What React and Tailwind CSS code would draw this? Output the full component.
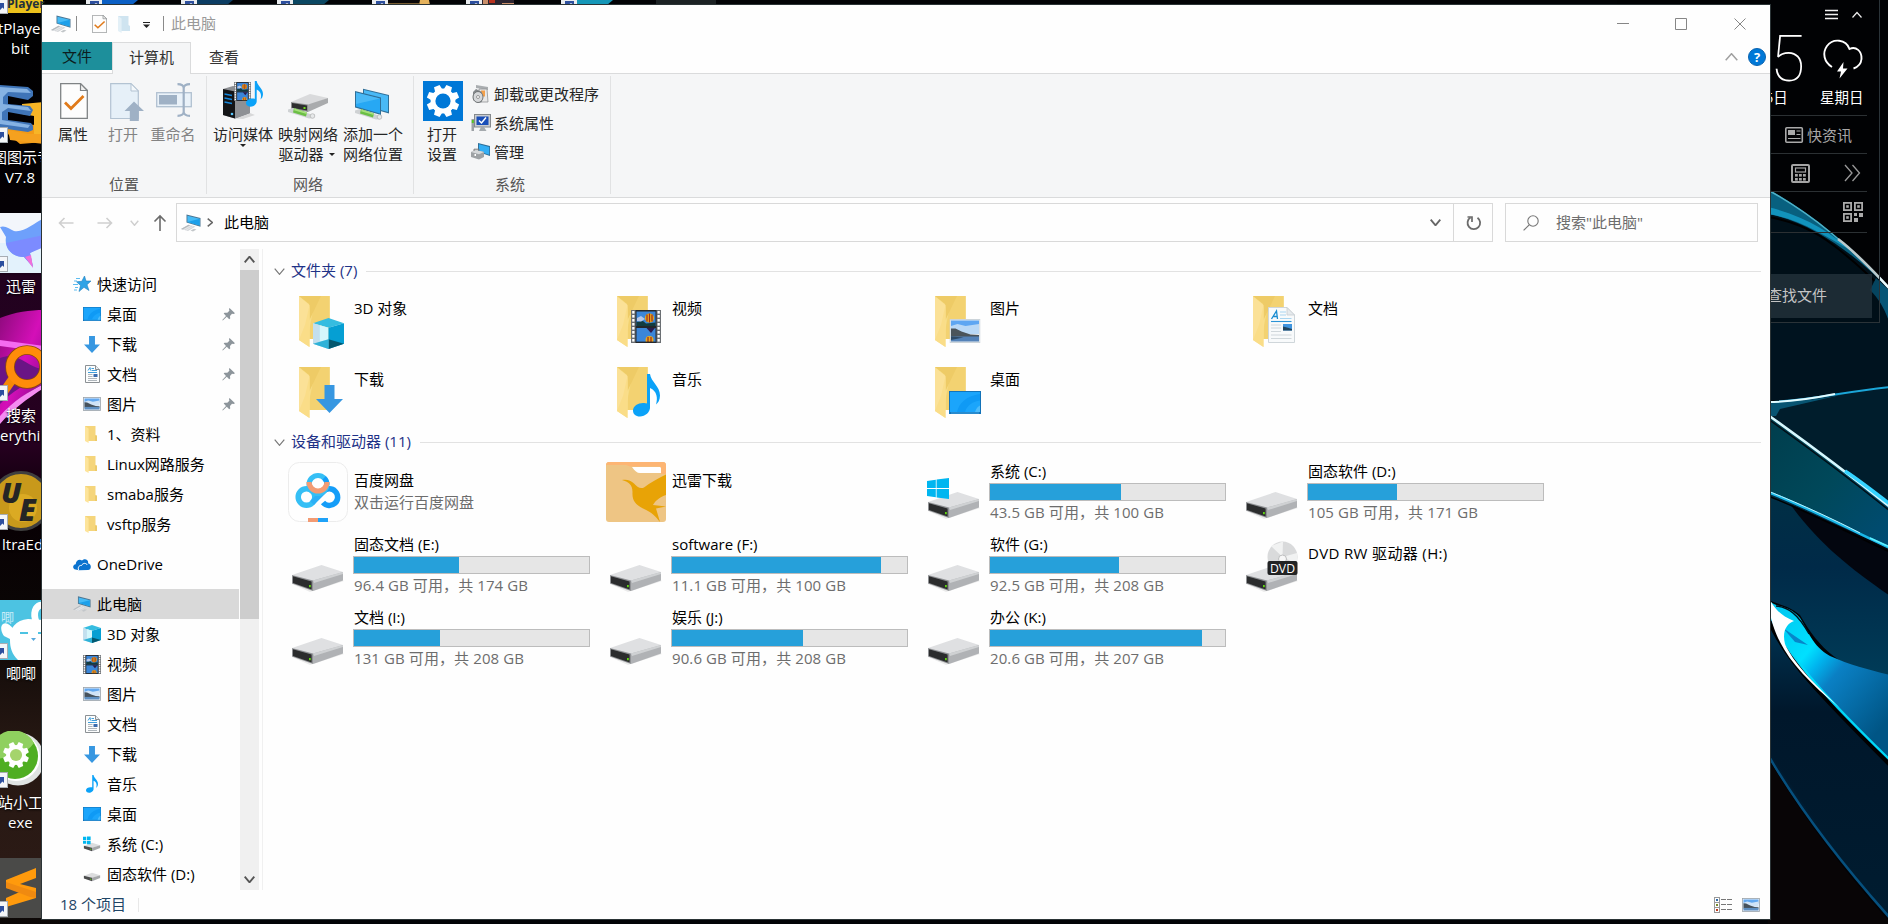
import React from "react";

/* ---------- small drawings ---------- */

const Pc = (p) => (
  <svg width="20" height="18" viewBox="0 0 20 18" {...p}>
    <path d="M0 15 7.500 10.800 14.500 12.600 7 17z" fill="#d3d6d9" />
    <path d="M0 15 7.500 10.800 9 11.200 1.600 15.400z" fill="#b4b9bd" />
    <path d="M3 15.500 10 11.700M5 16.200 12.300 12.300" stroke="#f3f4f5" strokeWidth=".6" />
    <path d="M9.500 16.500 13 14.700 15.500 15.500 12 17.500z" fill="#c3c7ca" />
    <path d="M5.500.5 19.500 4V12.800L5.500 8.600z" fill="#4a7592" />
    <path d="M6.400 1.700 18.700 4.700V11.600L6.400 7.900z" fill="#46bbf6" />
    <path d="M6.400 7.900 18.700 4.700V11.600z" fill="#1da0ea" />
  </svg>
);

const Cube = (p) => (
  <svg width="18" height="18" viewBox="0 0 32 32" {...p}>
    <path d="M16 0 32 5.5 16 10 0 5.5z" fill="#35bce0" />
    <path d="M0 5.5 16 10V32L0 26.5z" fill="#a9e4f4" />
    <path d="M0 5.5 7 7.5V29L0 26.5z" fill="#c3dfee" />
    <path d="M7 7.5 16 10V22L7 24.5z" fill="#d5f6fc" />
    <path d="M32 5.5 16 10V32L32 26.5z" fill="#059fd3" />
    <path d="M16 22 32 26.5 16 32z" fill="#04586f" />
    <path d="M16 22 0 26.5 16 32z" fill="#2fb2d8" />
  </svg>
);

const Film = (p) => (
  <svg width="18" height="19" viewBox="0 0 30 33" preserveAspectRatio="none" {...p}>
    <rect width="30" height="33" fill="#6b6f73" />
    <rect x="4.5" width="21" height="33" fill="#23272b" />
    <rect x="5.5" y="1.5" width="19" height="14.5" fill="#3b86d8" />
    <rect x="5.5" y="18" width="19" height="14" fill="#3b86d8" />
    <path d="M5.5 12 12 11 15 13.500 24.500 12.500V16H5.500z" fill="#123c40" />
    <path d="M6 8 10 6 14 9 10 11.500 6 11z" fill="#b8c7e6" />
    <circle cx="18.500" cy="8" r="4.600" fill="#e9a81b" />
    <path d="M16 4.500V11.500M18.500 3.500V12.500M21 4.500V11.500" stroke="#9c2b1d" strokeWidth="1.200" />
    <path d="M15.500 18H24L20 23z" fill="#2b1d4d" />
    <circle cx="18.500" cy="30" r="4" fill="#e9a81b" />
    <path d="M17 27V32M20 27V32" stroke="#9c2b1d" strokeWidth="1.200" />
    <rect x="5.500" y="31.600" width="19" height="1.400" fill="#23272b" />
    {[1, 5, 9, 13, 17, 21, 25, 29].map((y) => (
      <g key={y} fill="#fff">
        <rect x="1.200" y={y} width="2.300" height="2.600" />
        <rect x="26.500" y={y} width="2.300" height="2.600" />
      </g>
    ))}
  </svg>
);

const Photo = (p) => (
  <svg width="18" height="14" viewBox="0 0 31 24" preserveAspectRatio="none" {...p}>
    <rect x=".8" y=".8" width="29.400" height="22.400" fill="#f4f6f8" stroke="#9aa3ab" strokeWidth="1.400" />
    <rect x="2.500" y="2.500" width="26" height="7" fill="#62a8f0" />
    <path d="M2.500 8 9 6 17 8 28.500 6V15H2.500z" fill="#cfe3f7" />
    <path d="M2.500 9 7 9.500 14 13 22 15.500 28.500 16V18H2.500z" fill="#46525c" />
    <path d="M2.500 17H28.500V21.500H2.500z" fill="#5e8fc2" />
  </svg>
);

const BigPhoto = (p) => (
  <svg viewBox="0 0 31 24" {...p}>
    <rect x=".5" y=".5" width="30" height="23" fill="#e9eef2" stroke="#ccd4da" />
    <rect x="1.500" y="1.500" width="28" height="8" fill="#5ea6f2" />
    <path d="M1.500 7 8 5 16 7 29.500 5V15H1.500z" fill="#b9d8f6" />
    <path d="M1.500 9.500 6 9.500 12 12.500 21 15.500 29.500 16V18.500H1.500z" fill="#4b545b" />
    <path d="M1.500 17.500H29.500V22.500H1.500z" fill="#5482b8" />
    <path d="M1.500 17.500 14 18.500 1.500 21z" fill="#2f4a66" />
  </svg>
);

const Doc = (p) => (
  <svg width="15" height="18" viewBox="0 0 15 18" {...p}>
    <path d="M.5.500H10.500L14.500 4.500V17.500H.5z" fill="#fcfdfd" stroke="#8b9094" />
    <path d="M10.500.5V4.500H14.500" fill="#eceff1" stroke="#8b9094" />
    <path d="M3 5.500 5 2.500 5.500 5.500M6.500 3.500H9M6.500 5.500H12M3 7.500H12" fill="none" stroke="#2a93d6" strokeWidth=".9" />
    <path d="M3 9.500H7.500M3 11.500H7.500M3 13.500H12M3 15.500H12" stroke="#9aa3ab" strokeWidth=".8" />
    <rect x="8.500" y="9" width="4" height="3" fill="#3a6bad" />
  </svg>
);

const BigDoc = (p) => (
  <svg viewBox="0 0 27 36" {...p}>
    <path d="M.5.500H19L26.500 8V35.500H.5z" fill="#f8fafb" stroke="#cfd6da" />
    <path d="M19 .5V8H26.500z" fill="#e6eaed" stroke="#c5ccd1" strokeWidth=".8" />
    <path d="M3.500 12 8.500 4 9.500 12M5.500 9.500H9" stroke="#1a8cd0" strokeWidth="1.300" fill="none" />
    <path d="M12 5H18M12 8H18M12 11.500H23.500" stroke="#9fd0ee" strokeWidth=".9" />
    <path d="M3 14.500H23.500" stroke="#2a93d6" strokeWidth="1.100" />
    <path d="M3 18H13M3 21H13M3 24.500H13M3 28H23.500M3 31.500H23.500" stroke="#cbd2d7" strokeWidth=".9" />
    <rect x="15" y="17" width="9" height="6.500" fill="#3f94de" />
    <path d="M15 19.500 19 20.500 24 22V23.500H15z" fill="#21455f" />
  </svg>
);

const Down = (p) => (
  <svg width="16" height="17" viewBox="0 0 27 28" preserveAspectRatio="none" {...p}>
    <path d="M8.500 0H18.500V14H27L13.500 28 0 14H8.500z" fill="#3797e1" />
  </svg>
);

const Note = (p) => (
  <svg width="12" height="18" viewBox="0 0 27 43" preserveAspectRatio="none" {...p}>
    <path d="M14 0H17C18 8 27 12 27 21.500 27 26 25 29 23 30.500 25 24 24 17 17 14V33C17.500 38 12 42.500 7 42.500 2.500 42.500 0 40 0 36.500 0 32 5 29 10 29 12 29 13 29.300 14 29.500z" fill="#0ba2f8" />
  </svg>
);

const Desk = (p) => (
  <svg width="18" height="14" viewBox="0 0 32 24" preserveAspectRatio="none" {...p}>
    <rect width="32" height="24" fill="#1272b8" />
    <rect x="1" y="1" width="30" height="21" fill="#1ba5fb" />
    <path d="M8 22C10 12 18 5 31 3V10C24 11 18 15 16 22z" fill="#0f9af5" />
    <path d="M26 22C27 18 29 16 31 15V22z" fill="#4dbcfb" />
    <path d="M2 23H30" stroke="#5fc3ff" strokeWidth=".6" />
  </svg>
);

const DriveShape = () => (
  <g>
    <path d="M4 41V49L22 57 56 46 50 43z" fill="#000" opacity=".08" />
    <path d="M4 40 33.500 30 55 37 25 46z" fill="#dfe0e2" />
    <path d="M25 45.500 55 37V45.500L25 56z" fill="#b0b2b5" />
    <path d="M25 45.500 55 37V39L26 48z" fill="#cfd1d3" />
    <path d="M4 40 25 45.500V56L4 48.500z" fill="#8f9194" />
    <path d="M5 41.300 23.600 46.500V54.600L5 48z" fill="#2b2c2d" />
    <rect x="21" y="50" width="1.800" height="2.200" fill="#5fd411" />
  </g>
);

const WinLogo = (p) => (
  <svg width="22" height="21" viewBox="0 0 22 21" {...p}>
    <path d="M0 3 8.800 1.700V10H0zM9.600 1.600 22 0V10H9.600zM0 11H8.800V19.300L0 18zM9.600 11H22V21L9.600 19.400z" fill="#00b6f0" />
  </svg>
);

const Drive = ({ kind }) => (
  <svg width="60" height="60" viewBox="0 0 60 60">
    <DriveShape />
    {kind === "win" && <WinLogo x="3" y="16" />}
    {kind === "dvd" && (
      <g>
        <ellipse cx="40.500" cy="22" rx="15" ry="15.500" fill="#d9dadb" />
        <path d="M40.500 22 29 11 41 6.500zM40.500 22 55 18V29z" fill="#f1f2f2" />
        <circle cx="40.500" cy="24" r="4" fill="#f7f7f7" stroke="#bdbebf" />
        <rect x="25.500" y="26" width="30" height="14" rx="2" fill="#222324" />
        <text x="40.500" y="38" textAnchor="middle" fontSize="13" fontFamily="Open Sans, sans-serif" fill="#fff" textLength="25" lengthAdjust="spacingAndGlyphs">DVD</text>
      </g>
    )}
  </svg>
);

const SmallDrive = ({ win }) => (
  <svg width="20" height="18" viewBox="0 0 20 18">
    <path d="M1 11 10 7.500 19 10.500 10 13.500z" fill="#dcddde" />
    <path d="M10 13.200 19 10.500V13.500L10 17z" fill="#a5a7a9" />
    <path d="M1 11 10 13.200V17L1 14z" fill="#4b4c4d" />
    <rect x="8" y="14.200" width="1.200" height="1.200" fill="#5fd411" />
    {win && <path d="M0 1H3.600V4.500H0zM4.400.8H8.500V4.500H4.400zM0 5.300H3.600V8.800H0zM4.400 5.300H8.500V9.200H4.400z" fill="#00b6f0" />}
  </svg>
);

const SmallFolder = () => (
  <svg width="12" height="17" viewBox="0 0 12 17">
    <path d="M0 0H10.500V9L12 10V15H0z" fill="#f5d57b" />
    <path d="M0 0 3.600 2.500V17L0 15z" fill="#fde49a" />
    <path d="M10 9.500H12V15H10z" fill="#edca69" />
  </svg>
);

const overlays = {
  cube: <Cube x="25" y="27" width="31" height="31" />,
  film: <Film x="25" y="19" width="30" height="33" />,
  photo: <BigPhoto x="25.500" y="28" width="31" height="24" />,
  doc: <BigDoc x="26" y="16" width="27" height="36" />,
  down: <Down x="28" y="23" width="27" height="28" />,
  note: <Note x="27" y="12" width="27" height="43" />,
  desk: <Desk x="25" y="29" width="32" height="23" />,
};

const Folder = ({ kind }) => (
  <svg width="60" height="60" viewBox="0 0 60 60">
    <path d="M11 5H41.700V48H11z" fill="#f7dc85" />
    <path d="M28 5H41.700V48H21V40z" fill="#f1d06b" opacity=".8" />
    <path d="M11 5H33L21 30V13z" fill="#eecb66" />
    <path d="M11 5.500 21.500 14V56L11 49z" fill="#fbe197" />
    <path d="M17 34 21.500 14V56L11 49z" fill="#fadd88" />
    {overlays[kind]}
  </svg>
);

const Star = () => (
  <svg width="18" height="16" viewBox="0 0 18 16">
    <path d="M11.500 0 13 5H18L14 8.700 16 14.500 11 11.300 6 15.500 7.500 9.500 3.500 5.800 8.800 5.300z" fill="#2fa3e6" stroke="#1f7fc0" strokeWidth=".6" />
    <path d="M3 2.500H7M1 5H4M0 8.500H5M2 11.500H5M1 14H4" stroke="#5dbcf0" strokeWidth="1" />
  </svg>
);

const Cloud = () => (
  <svg width="18" height="13" viewBox="0 0 18 13">
    <path d="M2.500 11.500C-.8 11-.5 6.600 2.700 6.300 2.700 2.500 6.500.5 9 2.500 12-.5 16 2 15 5.200 18.500 5.500 19 11.500 15 12L6 12.300z" fill="#0a73cf" />
    <path d="M5.500 12C4.500 8.500 7 7 8.500 7.500 10 4.500 13.500 5 14.200 7" fill="none" stroke="#fff" strokeWidth="1" />
  </svg>
);

const Pin = () => (
  <svg width="14" height="14" viewBox="0 0 14 14">
    <path d="M7.500 1 13 6.200 11.500 7 10 6.800 8 9 8.200 11.500 7.200 12.300 4.800 9.800.8 13.500.3 13 4 9 1.700 6.600 2.500 5.700 5.300 5.800 7.400 3.800 7 2z" fill="#8d959b" />
  </svg>
);

const Chevron = ({ dir = "down", w = 11, h = 6, color = "#777", sw = 1.3 }) => {
  const d = {
    down: `M.7 .7 ${w / 2} ${h - 0.7} ${w - 0.7} .7`,
    up: `M.7 ${h - 0.7} ${w / 2} .7 ${w - 0.7} ${h - 0.7}`,
    right: `M.7 .7 ${w - 0.7} ${h / 2} .7 ${h - 0.7}`,
  };
  return (
    <svg width={w} height={h} viewBox={`0 0 ${w} ${h}`}>
      <path d={d[dir]} fill="none" stroke={color} strokeWidth={sw} />
    </svg>
  );
};

const Caret = () => (
  <svg width="6" height="3" viewBox="0 0 6 3"><path d="M0 0H6L3 3z" fill="#222" /></svg>
);

const CheckDoc = ({ w, h }) => (
  <svg width={w} height={h} viewBox="0 0 28 36" preserveAspectRatio="none">
    <path d="M.7.7H20.500L27.300 7.500V35.300H.7z" fill="#fdfdfd" stroke="#7f8385" strokeWidth="1.300" />
    <path d="M20.500.7V7.500H27.300z" fill="#f0f0f0" stroke="#7f8385" strokeWidth="1.200" />
    <path d="M5 19.500 11 25.500 23.500 13" fill="none" stroke="#e07a1a" strokeWidth="2.800" />
  </svg>
);

const OpenDoc = () => (
  <svg width="35" height="38" viewBox="0 0 35 38">
    <path d="M.7.7H21L28.300 8V35.500H.7z" fill="#e6f0f8" stroke="#b3c3d2" strokeWidth="1.200" />
    <path d="M21 .7V8H28.300z" fill="#f4f8fb" stroke="#b3c3d2" />
    <path d="M24 18.500 34 28H28.800V38H19.800V28H14.500z" fill="#9fb1c5" />
  </svg>
);

const Rename = () => (
  <svg width="36" height="34" viewBox="0 0 36 34">
    <rect x=".7" y="9.700" width="34.600" height="14" fill="#eaf2f9" stroke="#b0c0d0" strokeWidth="1.300" />
    <rect x="3" y="12" width="18" height="9.500" fill="#9fb1c5" />
    <path d="M21.500 1.200C25 1.200 27.500 2 27.700 5V29C27.500 32 25 32.800 21.500 32.800M34 1.200C30.500 1.200 28 2 27.700 5M27.700 29C28 32 30.500 32.800 34 32.800" fill="none" stroke="#9fb1c5" strokeWidth="2.200" />
  </svg>
);

const MediaServer = () => (
  <svg width="40" height="38" viewBox="0 0 40 38">
    <path d="M0 8 10 5 27 8V32L12 37.500 0 34z" fill="#8b8e92" />
    <path d="M0 8 12 10.500V37.500L0 34z" fill="#131517" />
    <path d="M12 10.500 27 8V32L12 37.500z" fill="#8e9195" />
    <path d="M1.500 13 9 14.500M1.500 17 9 18.500M1.500 21 9 22.500" stroke="#1688dd" strokeWidth="1.400" />
    <circle cx="9" cy="33" r="1.300" fill="#59c8ff" />
    <path d="M12 37.500 27 32 32 34 20 38z" fill="#000" opacity=".12" />
    <Film x="11" y="1" width="17" height="19" />
    <Note x="23" y="0" width="17" height="26" />
  </svg>
);

const NetPlug = ({ y }) => (
  <g transform={`translate(0 ${y})`}>
    <path d="M0 2.500 5 1 22 7 27 7.500 26 11 21 11.500 0 5z" fill="#cfd2d4" />
    <path d="M6 1 19 5.500 18 9.500 5 5.500z" fill="#6bbf45" />
    <path d="M6.500 1.500 19 5.500 18.700 7 6 3.200z" fill="#a7e07d" />
    <circle cx="24.500" cy="9" r="2.300" fill="#e6e8e9" stroke="#aaa" strokeWidth=".6" />
  </g>
);

const NetDrive = () => (
  <svg width="40" height="27" viewBox="0 0 40 27">
    <path d="M3 9 22 1 40 5 22 12z" fill="#d9dadc" />
    <path d="M20 11.500 40 5V10L20 19z" fill="#a9abad" />
    <path d="M3 9 20 11.500V19L3 15.500z" fill="#8c8e90" />
    <path d="M4 10 19 12.500V17.500L4 14.700z" fill="#2d2e2f" />
    <rect x="15.500" y="14" width="2" height="2" fill="#6fe01a" />
    <NetPlug y={14} />
  </svg>
);

const NetPlaces = () => (
  <svg width="36" height="32" viewBox="0 0 36 32">
    <path d="M8 .8 34 7V25.500L8 18z" fill="#2f6f98" />
    <path d="M9 2 33 7.700V24L9 17.500z" fill="#49b9f6" />
    <path d="M0 3 26 9.500V27L0 19.500z" fill="#2f6f98" />
    <path d="M1 4.400 25 10.400V25.500L1 18.600z" fill="#27a8f4" />
    <path d="M1 4.400 25 10.400 1 16z" fill="#58c0f8" opacity=".7" />
    <NetPlug y={20} />
  </svg>
);

const gearTeeth = [22.5, 67.5, 112.5, 157.5, 202.5, 247.5, 292.5, 337.5];
const Gear = ({ r = 20, fill = "#fff", hole = "#0078d7" }) => (
  <g transform={`translate(${r} ${r})`}>
    {gearTeeth.map((a) => (
      <path key={a} transform={`rotate(${a})`} d={`M${-r * 0.15} ${-r * 0.81}H${r * 0.15}L${r * 0.2} ${r * -0.5}H${-r * 0.2}z`} fill={fill} />
    ))}
    <circle r={r * 0.62} fill={fill} />
    <circle r={r * 0.38} fill={hole} />
  </g>
);

const Uninstall = () => (
  <svg width="20" height="20" viewBox="0 0 20 20">
    <path d="M5 1 17 3V6L5 4z" fill="#a9adb0" />
    <path d="M8 5H16L17 18H8z" fill="#e8e8e8" stroke="#8f9396" strokeWidth=".8" />
    <rect x="10" y="6.500" width="4" height="6" fill="#f3a04a" />
    <path d="M2 8 5 5 11 8V18L7 19 2 16z" fill="#84888b" />
    <ellipse cx="7" cy="13" rx="5" ry="5.500" fill="#d6d8da" stroke="#707476" />
    <circle cx="7" cy="13" r="1.500" fill="#fff" stroke="#777" strokeWidth=".7" />
  </svg>
);

const SysProps = () => (
  <svg width="20" height="18" viewBox="0 0 20 18">
    <rect x="3.500" y=".5" width="16" height="12.500" fill="#c9ccd0" stroke="#84898d" />
    <rect x="5.500" y="2.500" width="12" height="8.500" fill="#1a4fb8" />
    <path d="M8 6.500 10.500 9 15 3.500" stroke="#fff" strokeWidth="1.500" fill="none" />
    <path d="M10 13H13L15.500 17H8z" fill="#a5aaae" />
    <path d="M.5 5H3V17H.5z" fill="#9ca1a5" /><rect x=".8" y="6" width="2" height="3" fill="#56c425" />
  </svg>
);

const Manage = () => (
  <svg width="20" height="17" viewBox="0 0 20 17">
    <path d="M7 0 19 3V13L7 9z" fill="#2f6f98" />
    <path d="M8 1.300 18.200 4V11.800L8 8.500z" fill="#33aef4" />
    <path d="M0 9 5 7 13 9V14L8 16.500 0 14z" fill="#9ea2a5" />
    <path d="M0 9 5 7 13 9 8 11.300z" fill="#d5d8da" />
    <path d="M3 8V6.200H8V8" fill="none" stroke="#777" />
    <rect x="3.500" y="11" width="1.500" height="2" fill="#fff" />
  </svg>
);

/* ---------- desktop ---------- */

const Wallpaper = () => (
  <svg className="absolute inset-0" width="1888" height="924" viewBox="0 0 1888 924">
    <defs>
      <linearGradient id="swoosh" gradientUnits="userSpaceOnUse" x1="1770" y1="620" x2="1888" y2="720">
        <stop offset="0" stopColor="#00c8f0" /><stop offset=".32" stopColor="#00e0ff" />
        <stop offset=".42" stopColor="#00b4ee" /><stop offset=".55" stopColor="#0a80c4" /><stop offset="1" stopColor="#005585" />
      </linearGradient>
      <linearGradient id="teal" x1="0" y1="0" x2="1" y2="1">
        <stop offset="0" stopColor="#003d4c" /><stop offset=".5" stopColor="#00485a" /><stop offset="1" stopColor="#004c75" />
      </linearGradient>
      <linearGradient id="navy" x1="0" y1="0" x2="0" y2="1">
        <stop offset="0" stopColor="#002f45" /><stop offset=".4" stopColor="#002a48" /><stop offset="1" stopColor="#003c58" />
      </linearGradient>
      <linearGradient id="deep" x1="0" y1="0" x2="0" y2="1">
        <stop offset="0" stopColor="#003a5c" /><stop offset=".35" stopColor="#00172b" /><stop offset="1" stopColor="#001c30" />
      </linearGradient>
      <linearGradient id="rim" gradientUnits="userSpaceOnUse" x1="1800" y1="830" x2="1815" y2="820">
        <stop offset="0" stopColor="#06507e" /><stop offset="1" stopColor="#06507e" stopOpacity="0" />
      </linearGradient>
      <linearGradient id="left" x1="0" y1="0" x2="0" y2="1">
        <stop offset="0" stopColor="#000" /><stop offset=".28" stopColor="#050005" /><stop offset=".3" stopColor="#22021f" />
        <stop offset=".48" stopColor="#260020" /><stop offset=".56" stopColor="#080004" /><stop offset=".66" stopColor="#0a0605" />
        <stop offset=".8" stopColor="#251712" /><stop offset=".93" stopColor="#2b1a15" /><stop offset="1" stopColor="#0b0706" />
      </linearGradient>
      <linearGradient id="magenta" x1="0" y1="0" x2="1" y2="1">
        <stop offset="0" stopColor="#8d0a7c" /><stop offset=".5" stopColor="#d40fb8" /><stop offset="1" stopColor="#7a0a86" />
      </linearGradient>
    </defs>
    <rect width="1888" height="924" fill="#020306" />
    <rect width="60" height="924" fill="url(#left)" />
    <path d="M0 318C15 312 30 310 44 310V384C28 392 12 402 0 420z" fill="url(#magenta)" />
    <path d="M0 340 44 346V352L0 346z" fill="#f46bf0" />
    <path d="M0 358C20 350 32 372 44 368V380C25 382 12 392 0 404z" fill="#6a1585" />
    <path d="M0 416C14 400 28 392 44 384V388C28 398 12 410 0 424z" fill="#f58cf2" />

    <path d="M1768 190C1815 215 1850 245 1890 288V400H1768z" fill="#00131f" />
    <path d="M1768 189C1813 214 1850 246 1890 289 1860 260 1815 222 1768 214z" fill="#0b789f" />
    <path d="M1768 207C1805 216 1830 232 1850 250 1825 236 1800 219 1768 214z" fill="#17b8ec" />
    <path d="M1768 190C1813 215 1850 246 1890 289" fill="none" stroke="#5fdcf8" strokeWidth="1.500" />
    <path d="M1838 239C1858 254 1872 270 1890 289" fill="none" stroke="#eafcff" strokeWidth="2.600" />
    <path d="M1768 217C1805 223 1830 236 1890 296" fill="none" stroke="#000" strokeWidth="2" />
    <path d="M1876 278 1890 291V324C1885 310 1880 300 1870 290z" fill="#075677" />

    <path d="M1768 402C1810 400 1840 392 1890 387V510C1850 470 1810 445 1768 416z" fill="#001d2c" />
    <path d="M1768 402C1800 402 1825 398 1845 394L1780 409 1776 416 1768 416z" fill="#075472" />
    <path d="M1768 402C1810 401 1840 392 1890 387" fill="none" stroke="#1ba6d8" strokeWidth="2" />
    <path d="M1768 402C1790 402 1815 398 1835 394" fill="none" stroke="#e2fbff" strokeWidth="2" />
    <path d="M1768 415C1810 445 1850 475 1890 507V550C1850 530 1810 508 1768 492z" fill="url(#teal)" />
    <path d="M1768 492C1810 508 1850 530 1890 550V680C1840 668 1820 650 1800 615 1790 606 1780 605 1768 600z" fill="url(#navy)" />
    <path d="M1790 504 1890 549V596C1850 568 1820 545 1790 504z" fill="#03060f" />
    <path d="M1768 415C1810 445 1850 475 1890 507" fill="none" stroke="#d5f8ff" strokeWidth="2.600" />
    <path d="M1845 471C1862 482 1876 494 1890 504" fill="none" stroke="#35d3ff" strokeWidth="3.500" />
    <path d="M1768 419C1810 449 1850 479 1890 511" fill="none" stroke="#000d16" strokeWidth="1.500" />
    <path d="M1768 492C1810 508 1850 530 1890 548" fill="none" stroke="#1ab7e8" strokeWidth="2.600" />
    <path d="M1768 491C1805 506 1835 520 1860 533" fill="none" stroke="#b9f3ff" strokeWidth="1" />
    <path d="M1768 496C1810 512 1850 534 1890 552" fill="none" stroke="#000" strokeWidth="1.500" />

    <path d="M1768 600C1785 655 1830 705 1890 761V920C1840 862 1800 810 1768 755z" fill="url(#deep)" />
    <path d="M1768 755C1800 806 1840 858 1890 914V890C1850 850 1810 800 1768 735z" fill="url(#rim)" opacity=".5" />
    <path d="M1768 755C1800 810 1840 862 1890 918" fill="none" stroke="#06507e" strokeWidth="2.500" />
    <path d="M1768 758C1800 812 1838 864 1890 922V924H1768z" fill="#080506" />
    <path d="M1768 619C1785 659 1820 695 1890 765" fill="none" stroke="#000" strokeWidth="4" />
    <path d="M1768 600C1778 609 1788 604 1800 618 1808 630 1812 646 1830 656 1850 665 1870 670 1890 675V761C1830 705 1785 655 1768 612z" fill="url(#swoosh)" />
    <path d="M1783 628 1808 645 1795 642z" fill="#0786c9" />
    <path d="M1770 614C1785 652 1818 690 1890 760" fill="none" stroke="#00d9f7" strokeWidth="2.200" />
    <path d="M1770 600C1776 611 1782 616 1794 621 1786 624 1782 632 1785 644 1793 662 1812 682 1840 708 1810 684 1790 662 1780 642 1774 630 1772 622 1770 614z" fill="#fff" />
    <path d="M1776 606C1788 607 1798 614 1809 634" fill="none" stroke="#00121d" strokeWidth="1.300" />
    <path d="M1870 538 1890 547" stroke="#5ef0ff" strokeWidth="1.500" />
  </svg>
);

const Shortcut = ({ className }) => (
  <svg className={"absolute left-0 " + className} width="8" height="16" viewBox="0 0 8 16">
    <rect x="-4" y=".5" width="11.500" height="15" fill="#f4f6f8" stroke="#a7adb3" />
    <path d="M0 5H4V11L2.500 9.500 0 12z" fill="#2d4f9e" />
  </svg>
);

const topStrip = [
  { x: "left-[86px]", tail: "#0b5fc4" },
  { x: "left-[181px]", tail: "#0c3d63" },
  { x: "left-[277px]", tail: "#0b4762" },
  { x: "left-[372px]", tail: "#0b0808", kind: "figure" },
  { x: "left-[466px]", tail: "#2c2430", kind: "party" },
  { x: "left-[561px]", tail: "#1597b8" },
];

const labelCls = "absolute whitespace-nowrap text-[15px] leading-5 text-white [text-shadow:0_1px_2px_#000]";

const Desktop = () => (
  <>
    <Wallpaper />
    {topStrip.map((t) => (
      <svg key={t.x} className={"absolute top-0 " + t.x} width="62" height="5" viewBox="0 0 62 5">
        <path d={t.kind === "party" ? "M16 0H48V5H16z" : "M16 0H52L46 5H16z"} fill={t.tail} />
        {t.kind === "figure" && <path d="M48 0H57L58 5H47zM16 3.500H47V5H16z" fill="#e5b25c" />}
        {t.kind === "party" && <path d="M17 0H22V5H17zM36 3H48V5H36z" fill="#c98f6a" />}
        {t.kind === "party" && <path d="M23 0H29V3H23z" fill="#b8321f" />}
        <rect width="16" height="5" fill="#e9ecef" /><path d="M4 1H13V5L10 3 7 5H4z" fill="#2d4f9e" />
      </svg>
    ))}
    <div className="absolute left-[656px] top-0 h-[5px] w-[60px] bg-[#1c2224]" />
    <div className="absolute left-[7px] top-0 flex h-[13px] w-[36px] items-end bg-[#ecc21c] text-[12px] font-bold leading-[18px] text-[#22303a]"><span>Player</span></div>
    <Shortcut className="-top-[2px]" />
    <div className={labelCls + " left-[-2px] top-[18px]"}>tPlayer</div>
    <div className={labelCls + " left-[11px] top-[38px]"}>bit</div>
    <svg className="absolute left-0 top-[82px]" width="44" height="64" viewBox="0 0 44 64">
      <path d="M8 40 44 44V60L20 62 8 52z" fill="#f29a17" />
      <path d="M22 22 44 20V62L34 56V34L22 32z" fill="#f7b526" />
      <path d="M28 52H44V62L10 58 8 48z" fill="#f5a11f" />
      <path d="M0 3 28 5 33 9V14L28 18 8 14V22L30 24 33 28 30 34 8 30V38L31 41 33 44V48L28 50 0 46z" fill="#3f74b8" />
      <path d="M0 5 27 7 31 11 8 10 3 15V22L28 25 31 29 8 26 2 30V38L30 43 28 46 0 42z" fill="#86b2e3" />
    </svg>
    <Shortcut className="top-[127px]" />
    <div className={labelCls + " -left-[8px] top-[147px]"}>图图示专</div>
    <div className={labelCls + " left-[5px] top-[167px]"}>V7.8</div>
    <svg className="absolute left-0 top-[213px]" width="44" height="60" viewBox="0 0 44 60">
      <rect width="44" height="60" fill="#f3f6fb" /><rect y="30" width="44" height="30" fill="#e3f2fc" />
      <path d="M0 14C5 12 10 16 14 18 24 20 34 10 44 5V32L30 40 33 54 24 44C12 44 4 36 6 24z" fill="#6ea0fb" />
      <path d="M44 22V34L30 40 33 54 24 44C14 44 8 38 6 30z" fill="#7c8bff" />
      <path d="M25 44 31 42 33 55z" fill="#f16fd9" />
    </svg>
    <Shortcut className="top-[256px]" />
    <div className={labelCls + " left-[6px] top-[276px]"}>迅雷</div>
    <svg className="absolute left-0 top-[343px]" width="44" height="56" viewBox="0 0 44 56">
      <circle cx="27" cy="24" r="17" fill="none" stroke="#8c4a08" strokeWidth="9.500" />
      <path d="M14 34 0 54" stroke="#f58808" strokeWidth="9" />
      <circle cx="27" cy="24" r="17" fill="none" stroke="#ff8c0a" strokeWidth="8" />
    </svg>
    <Shortcut className="top-[385px]" />
    <div className={labelCls + " left-[6px] top-[405px]"}>搜索</div>
    <div className={labelCls + " left-[0px] top-[425px]"}>erything</div>
    <svg className="absolute left-0 top-[470px]" width="44" height="62" viewBox="0 0 44 62">
      <circle cx="21" cy="31" r="28.500" fill="#c8991b" stroke="#3f3f3f" strokeWidth="3" />
      <circle cx="23" cy="38" r="14" fill="#e8b62a" opacity=".6" />
      <text x="1" y="33" fontSize="29" fontWeight="800" fontStyle="italic" fontFamily="Open Sans, sans-serif" fill="#252525">U</text>
      <text x="19" y="51" fontSize="30" fontWeight="800" fontStyle="italic" fontFamily="Open Sans, sans-serif" fill="#252525">E</text>
    </svg>
    <Shortcut className="top-[514px]" />
    <div className={labelCls + " left-[2px] top-[534px]"}>ltraEdit</div>
    <svg className="absolute left-0 top-[600px]" width="44" height="60" viewBox="0 0 44 60">
      <rect width="44" height="60" fill="#4cc3e2" />
      <path d="M32 20C29 8 36 0 44 2V8C38 8 37 14 39 20z" fill="#fff" />
      <path d="M10 40C9 28 16 20 28 19L44 20V60H18C12 54 10 48 10 40z" fill="#fff" />
      <path d="M3 24C0 26 1 32 4 36L12 40 14 30C10 24 6 22 3 24z" fill="#fff" />
      <path d="M20 33H28M38 33H44" stroke="#4cc3e2" strokeWidth="2" /><path d="M31 38H36L33.500 41z" fill="#56a8dc" />
      <text x="1" y="22" fontSize="13" fontFamily="Noto Sans CJK SC, sans-serif" fill="#c9ecf8">唧</text>
    </svg>
    <Shortcut className="top-[643px]" />
    <div className={labelCls + " left-[6px] top-[663px]"}>唧唧</div>
    <svg className="absolute left-0 top-[731px]" width="44" height="56" viewBox="0 0 44 56">
      <circle cx="18" cy="28" r="26.500" fill="#dfe3e2" /><circle cx="16" cy="26" r="24" fill="#fff" />
      <circle cx="15" cy="25" r="23" fill="#4fae22" />
      <path d="M-8 14A23 23 0 0 1 34 12C24 26 8 24-8 30z" fill="#8fd05f" />
      <g transform="translate(0 8)"><Gear r={16} fill="#fff" hole="#a5d46c" /></g>
    </svg>
    <Shortcut className="top-[772px]" />
    <div className={labelCls + " left-[-2px] top-[792px]"}>站小工具</div>
    <div className={labelCls + " left-[8px] top-[812px]"}>exe</div>
    <svg className="absolute left-0 top-[858px]" width="44" height="60" viewBox="0 0 44 60">
      <rect width="44" height="60" fill="#4a4a48" />
      <path d="M6 22 36 10V20L20 26 36 30V40L6 49V40L22 33 6 30z" fill="#ff9a0c" />
      <path d="M6 24 36 34V40L30 39 6 30z" fill="#f08a10" />
    </svg>
    <Shortcut className="top-[901px]" />
  </>
);

const Gadget = () => (
  <div className="absolute left-[1617px] top-0 h-[323px] w-[263px] border-b border-r border-[#2a3338] bg-black/20 text-[15px]">
    <svg className="absolute left-[153px] top-0" width="108" height="240" viewBox="0 0 108 240">
      <path d="M0 115.500H97M0 153.500H97M0 191.500H97M0 232.500H97" stroke="#2b3033" />
      <path d="M55 10.500H68M55 14.500H68M55 18.500H68" stroke="#f2f2f2" strokeWidth="1.300" />
      <path d="M82.500 17.500 87 12.500 91.500 17.500" fill="none" stroke="#eee" strokeWidth="1.200" />
      <path d="M62 67C54 62 52 53 57 46 63 38 76 39 79.500 49 86 46 92 51 91.500 59 91 64 88 67 83.500 68.500" fill="none" stroke="#fff" strokeWidth="1.900" />
      <path d="M73.500 62 67 71.500H71L69.500 78.500 77.500 68.500H73z" fill="#fff" />
      <rect x="15.800" y="127.800" width="16.500" height="14.500" rx="1" fill="none" stroke="#aaa" strokeWidth="1.600" />
      <rect x="18" y="130" width="7" height="5" fill="#aaa" /><path d="M26.500 131H30.500M26.500 134.500H30.500M18 138.500H30.500" stroke="#aaa" strokeWidth="1.200" />
      <rect x="22" y="165" width="17" height="17" rx="1" fill="none" stroke="#a5a5a5" strokeWidth="2" />
      <rect x="25.500" y="168" width="10" height="4" fill="none" stroke="#a5a5a5" strokeWidth="1.200" />
      {[174, 178].map((y) => [25, 29, 33].map((x) => <rect key={x + "-" + y} x={x} y={y} width="2.800" height="2.600" fill="#a5a5a5" />))}
      <path d="M75 165 82 173 75 181M82.500 165 89.500 173 82.500 181" fill="none" stroke="#999" strokeWidth="1.300" />
      {[[73, 202], [84, 202], [73, 213]].map(([x, y]) => (
        <g key={x + "-" + y}><rect x={x + 0.9} y={y + 0.9} width="7.200" height="7.200" fill="none" stroke="#aaa" strokeWidth="1.800" /><rect x={x + 3.200} y={y + 3.200} width="2.600" height="2.600" fill="#aaa" /></g>
      ))}
      <path d="M84 218H88V222H84zM89 213H93V217H89zM84 213H87V216H84z" fill="#aaa" />
    </svg>
    <div className="absolute left-[153px] top-[32px] font-[Roboto] text-[64px] font-thin leading-[56px] text-white">5</div>
    <div className="absolute left-[148px] top-[88px] whitespace-nowrap text-[14.500px] leading-5 text-white">5日</div>
    <div className="absolute left-[203px] top-[88px] whitespace-nowrap text-[14.500px] leading-5 text-white">星期日</div>
    <div className="absolute left-[190px] top-[125px] whitespace-nowrap leading-5 text-[#a8a8a8]">快资讯</div>
    <div className="absolute bottom-[4px] left-0 flex h-[44px] w-[255px] items-center bg-[#23323c]/80 pb-[2px] pl-[150px] leading-5 text-[#c4c4c4]">查找文件</div>
  </div>
);

/* ---------- explorer window ---------- */

const TitleBar = () => (
  <div className="flex h-[37px] items-center pl-[9px]">
    <Pc />
    <div className="ml-[5px] h-[15px] w-px bg-[#8a8a8a]" />
    <div className="ml-[15px]"><CheckDoc w={15} h={18} /></div>
    <svg className="ml-[11px] mt-[2px]" width="12" height="17" viewBox="0 0 12 17">
      <path d="M0 0H10.500V9L12 10V15H0z" fill="#cfe4f0" /><path d="M0 0 3.600 2.500V17L0 15z" fill="#e3f0f7" />
    </svg>
    <svg className="ml-[13px] mt-[3px]" width="7" height="6" viewBox="0 0 7 6"><path d="M0 .5H7" stroke="#222" strokeWidth="1" /><path d="M0 2.500H7L3.500 6z" fill="#222" /></svg>
    <div className="ml-[13px] h-[15px] w-px bg-[#8a8a8a]" />
    <span className="-mt-px ml-[7px] text-[#999]">此电脑</span>
    <div className="ml-auto mr-px flex">
      {["M0 5.500H12", "M.5.500H11.500V11.500H.5z", "M.5.500 11.500 11.500M11.500.500.500 11.500"].map((d) => (
        <div key={d} className="flex w-[58.500px] justify-center">
          <svg width="12" height="12" viewBox="0 0 12 12"><path d={d} fill="none" stroke="#868686" /></svg>
        </div>
      ))}
    </div>
  </div>
);

const Tabs = () => (
  <div className="flex h-8 text-[#333]">
    <div className="w-[70px] border-b border-[#dadbdc]">
      <div className="flex h-7 items-center justify-center bg-[#1d8f9b] text-[#0c1d20]">文件</div>
    </div>
    <div className="flex w-[79px] items-center justify-center border-x border-t border-[#dadbdc] bg-[#f5f6f7] pb-[3px]">计算机</div>
    <div className="flex flex-1 items-center border-b border-[#dadbdc] pb-px pl-[18px] pr-1">
      <span>查看</span>
      <div className="ml-auto flex items-center gap-[10px]">
        <Chevron dir="up" w={13} h={8} color="#a0a0a0" sw={1.5} />
        <div className="flex size-[18px] items-center justify-center rounded-full border border-[#0a63b0] bg-[#0078d7] text-[13px] font-bold leading-none text-white">?</div>
      </div>
    </div>
  </div>
);

const RibbonButton = ({ icon, lines, w, muted, caret, inlineCaret }) => (
  <div className={"flex flex-col items-center " + w}>
    <div className="mb-[3px] flex h-[45px] items-end justify-center">{icon}</div>
    {lines.map((t, i) => (
      <div key={t} className={"flex h-5 items-center whitespace-nowrap leading-5 " + (muted ? "text-[#838383]" : "text-[#262626]")}>
        {t}
        {inlineCaret && i === 1 && <span className="ml-[5px] mr-[3px]"><Caret /></span>}
      </div>
    ))}
    {caret && <Caret />}
  </div>
);

const RibbonGroup = ({ label, w, children }) => (
  <div className={"mt-[2px] flex h-[118px] flex-col border-r border-[#e1e2e3] " + w}>
    <div className="flex">{children}</div>
    <div className="mt-auto h-5 text-center leading-5 text-[#555]">{label}</div>
  </div>
);

const Ribbon = () => (
  <div className="flex h-[124px] border-b border-[#dadbdc] bg-[#f5f6f7]">
    <RibbonGroup label="位置" w="w-[165px]">
      <div className="w-2" />
      <RibbonButton w="w-[46px]" lines={["属性"]} icon={<div className="mb-[2px] ml-[2px]"><CheckDoc w={28} h={36} /></div>} />
      <RibbonButton w="w-[54px]" muted lines={["打开"]} icon={<div className="ml-[8px]"><OpenDoc /></div>} />
      <RibbonButton w="w-[46px]" muted lines={["重命名"]} icon={<div className="mb-[4px] ml-[2px]"><Rename /></div>} />
    </RibbonGroup>
    <RibbonGroup label={<span className="mr-1">网络</span>} w="w-[207px]">
      <div className="w-[3px]" />
      <RibbonButton w="w-[66px]" caret lines={["访问媒体"]} icon={<div className="mb-[2px]"><MediaServer /></div>} />
      <RibbonButton w="w-[64px]" inlineCaret lines={["映射网络", "驱动器"]} icon={<div className="mb-px"><NetDrive /></div>} />
      <RibbonButton w="w-[66px]" lines={["添加一个", "网络位置"]} icon={<div className="mb-[1px]"><NetPlaces /></div>} />
    </RibbonGroup>
    <RibbonGroup label={<span className="mr-1">系统</span>} w="w-[197px]">
      <div className="w-[4px]" />
      <RibbonButton w="w-[48px]" lines={["打开", "设置"]} icon={
        <svg className="ml-px" width="40" height="40" viewBox="0 0 40 40"><rect width="40" height="40" fill="#0078d7" /><Gear r={20} /></svg>
      } />
      <div className="ml-[5px] mt-[3px] text-[#262626]">
        {[[<Uninstall />, "卸载或更改程序"], [<SysProps />, "系统属性"], [<Manage />, "管理"]].map(([ic, t]) => (
          <div key={t} className="flex h-[29px] items-center gap-[3px]">{ic}<span>{t}</span></div>
        ))}
      </div>
    </RibbonGroup>
  </div>
);

const Arrow = ({ d, w = 16, h = 12, color }) => (
  <svg width={w} height={h} viewBox={`0 0 ${w} ${h}`}><path d={d} fill="none" stroke={color} strokeWidth="1.600" /></svg>
);

const AddressRow = () => (
  <div className="flex h-[51px] items-start pl-4 pt-[5px]">
    <div className="flex h-[39px] items-center">
      <Arrow color="#cfcfcf" d="M15.500 6H1.500M6.500 1 1.500 6 6.500 11" />
      <div className="w-[23px]" />
      <Arrow color="#cfcfcf" d="M.5 6H14.500M9.500 1 14.500 6 9.500 11" />
      <div className="w-[17px]" />
      <Chevron w={9} h={6} color="#cfcfcf" sw={1.4} />
      <div className="w-[14px]" />
      <Arrow w={14} h={17} color="#6b6b6b" d="M7 17V2M1.500 7.500 7 2 12.500 7.500" />
    </div>
    <div className="ml-[9px] flex h-[39px] w-[1317px] items-center border border-[#d9d9d9] pl-[4px]">
      <Pc />
      <div className="ml-[6px]"><Chevron dir="right" w={6} h={9} color="#666" sw={1.5} /></div>
      <span className="-mt-px ml-[11px] text-black">此电脑</span>
      <div className="ml-auto mr-3"><Chevron w={11} h={7} color="#666" sw={1.9} /></div>
      <div className="flex h-full w-[39px] items-center justify-center border-l border-[#d9d9d9] pl-[2px]">
        <svg width="16" height="16" viewBox="0 0 16 16">
          <path d="M4.500 2.500A6.300 6.300 0 1 0 11.500 2.700" fill="none" stroke="#6b6b6b" strokeWidth="1.800" />
          <path d="M1.500 2H6V7" fill="none" stroke="#6b6b6b" strokeWidth="1.700" />
        </svg>
      </div>
    </div>
    <div className="ml-3 flex h-[39px] w-[253px] items-center border border-[#d9d9d9] pl-[17px] text-[#6d6d6d]">
      <svg width="16" height="16" viewBox="0 0 16 16"><circle cx="10" cy="6" r="5.200" fill="none" stroke="#777" strokeWidth="1.100" /><path d="M6.200 9.800.6 15.400" stroke="#777" strokeWidth="1.200" /></svg>
      <span className="-mt-px ml-[17px]">搜索"此电脑"</span>
    </div>
  </div>
);

const NavRow = ({ icon, label, child, pin, selected, flexClass = "" }) => (
  <div className={"mr-px flex h-[30px] items-center " + (child ? "pl-[41px] " : "pl-[31px] ") + (selected ? "bg-[#d9d9d9] " : "") + flexClass}>
    <div className="mr-[6px] flex w-[18px] justify-center">{icon}</div>
    <span className="whitespace-nowrap text-black">{label}</span>
    {pin && <div className="ml-auto mr-[3px]"><Pin /></div>}
  </div>
);

const NavPane = () => (
  <div className="w-[198px] overflow-hidden pt-5">
    <NavRow icon={<Star />} label="快速访问" />
    <NavRow child pin icon={<Desk />} label="桌面" />
    <NavRow child pin icon={<Down />} label="下载" />
    <NavRow child pin icon={<Doc />} label="文档" />
    <NavRow child pin icon={<Photo />} label="图片" />
    {["1、资料", "Linux网路服务", "smaba服务", "vsftp服务"].map((t) => (
      <NavRow key={t} child icon={<div className="-ml-[2px]"><SmallFolder /></div>} label={t} />
    ))}
    <NavRow flexClass="my-[10px]" icon={<Cloud />} label="OneDrive" />
    <NavRow selected icon={<Pc />} label="此电脑" />
    <NavRow child icon={<Cube />} label="3D 对象" />
    <NavRow child icon={<Film />} label="视频" />
    <NavRow child icon={<Photo />} label="图片" />
    <NavRow child icon={<Doc />} label="文档" />
    <NavRow child icon={<Down />} label="下载" />
    <NavRow child icon={<Note />} label="音乐" />
    <NavRow child icon={<Desk />} label="桌面" />
    <NavRow child icon={<SmallDrive win />} label="系统 (C:)" />
    <NavRow child icon={<SmallDrive />} label="固态软件 (D:)" />
  </div>
);

const ScrollBar = () => (
  <div className="flex w-[19px] flex-col items-center bg-[#f0f0f0]">
    <div className="flex h-[21px] items-center"><Chevron dir="up" w={11} h={7} color="#555" sw={1.9} /></div>
    <div className="h-[349px] w-full bg-[#cdcdcd]" />
    <div className="mt-auto flex h-[21px] items-center"><Chevron w={11} h={7} color="#555" sw={1.9} /></div>
  </div>
);

const SectionHeader = ({ title }) => (
  <div className="flex h-[30px] items-center pl-[11px] pr-[9px]">
    <Chevron w={11} h={7} color="#777" sw={1.2} />
    <span className="-mt-[2px] ml-[6px] whitespace-nowrap text-[#1e3287]">{title}</span>
    <div className="ml-[9px] h-px flex-1 bg-[#e2e2e2]" />
  </div>
);

const folders = [
  ["cube", "3D 对象"], ["film", "视频"], ["photo", "图片"], ["doc", "文档"],
  ["down", "下载"], ["note", "音乐"], ["desk", "桌面"],
];

const drives = [
  { special: "baidu", name: "百度网盘", sub: "双击运行百度网盘" },
  { special: "xunlei", name: "迅雷下载" },
  { kind: "win", name: "系统 (C:)", used: 55.7, info: "43.5 GB 可用，共 100 GB" },
  { name: "固态软件 (D:)", used: 38, info: "105 GB 可用，共 171 GB" },
  { name: "固态文档 (E:)", used: 44.7, info: "96.4 GB 可用，共 174 GB" },
  { name: "software (F:)", used: 89, info: "11.1 GB 可用，共 100 GB" },
  { name: "软件 (G:)", used: 54.8, info: "92.5 GB 可用，共 208 GB" },
  { kind: "dvd", name: "DVD RW 驱动器 (H:)" },
  { name: "文档 (I:)", used: 36.5, info: "131 GB 可用，共 208 GB" },
  { name: "娱乐 (J:)", used: 55.7, info: "90.6 GB 可用，共 208 GB" },
  { name: "办公 (K:)", used: 90.2, info: "20.6 GB 可用，共 207 GB" },
];

const Baidu = () => (
  <svg width="60" height="60" viewBox="0 0 60 60">
    <rect x=".5" y=".5" width="59" height="59" rx="11" fill="#fefefe" stroke="#ececec" />
    <circle cx="18.500" cy="35" r="8.300" fill="none" stroke="#35bff5" strokeWidth="5.500" />
    <path d="M24 41 35.500 29.500" stroke="#2bb0f6" strokeWidth="5.500" />
    <path d="M35.300 29.500A8.300 8.300 0 1 1 35 40.500" fill="none" stroke="#149df8" strokeWidth="5.500" />
    <circle cx="30" cy="22.500" r="9" fill="none" stroke="#35bff5" strokeWidth="5" />
    <path d="M36 16A9 9 0 0 1 39 22.500" fill="none" stroke="#149df8" strokeWidth="5" />
    <path d="M21 20A9 9 0 1 0 39 20" fill="none" stroke="#f39b73" strokeWidth="5" />
    <rect x="20" y="56" width="10" height="4" fill="#f39b73" /><rect x="30" y="56" width="10" height="4" fill="#1fa2f8" />
  </svg>
);

const Xunlei = () => (
  <svg width="60" height="60" viewBox="0 0 60 60">
    <rect width="60" height="60" rx="3" fill="#eec584" />
    <path d="M0 4C0 1 1 0 3 0H57C59 0 60 1 60 4V12H55V6C55 5 54 4.500 53 4.500H24L20 3H0z" fill="#fdb573" />
    <path d="M26 5H53C54.500 5 55 5.500 55 6.500V11H34C31 11 29 9 26 5z" fill="#fff" />
    <path d="M16 18C20 17 25 18 28 21.500 31 25 34 27 38 25.500 44 21 52 16 60 12.500V33C54 35 50 38 47 43L60 44.500 50 46.500 54 60C50 55 46 50 37 46.500 29 42 26 38 26.500 30 26.500 22 22 20 16 18z" fill="#e8a306" />
    <path d="M47 43 60 34.500V39z" fill="#eec584" opacity=".4" />
  </svg>
);

const DriveItem = ({ d }) => (
  <div className="flex h-[73px] pt-[5px]">
    <div className="w-[65px] shrink-0">
      {d.special === "baidu" ? <Baidu /> : d.special === "xunlei" ? <Xunlei /> : <Drive kind={d.kind} />}
    </div>
    {d.info ? (
      <div className="-mt-px">
        <div className="ml-px h-5 leading-5 text-black">{d.name}</div>
        <div className="mt-[2px] h-[18px] w-[237px] border border-[#bcbcbc] bg-[#e6e6e6]">
          <div className="h-full bg-[#26a0da]" style={{ width: d.used + "%" }} />
        </div>
        <div className="ml-px mt-px h-5 whitespace-nowrap leading-5 tracking-[0.1px] text-[#6d6d6d]">{d.info}</div>
      </div>
    ) : (
      <div className="ml-px mt-[8px]">
        <div className={"leading-5 text-black " + (d.kind === "dvd" ? "tracking-[0.35px]" : "")}>{d.name}</div>
        {d.sub && <div className="mt-[2px] leading-5 text-[#6d6d6d]">{d.sub}</div>}
      </div>
    )}
  </div>
);

const Content = () => (
  <div className="ml-[3px] flex-1 border-l border-[#f0f0f0] pt-[7px]">
    <SectionHeader title="文件夹 (7)" />
    <div className="grid h-[141px] auto-rows-[71px] grid-cols-[repeat(4,318px)] pl-[25px]">
      {folders.map(([k, t]) => (
        <div key={k} className="flex pt-[5px]">
          <Folder kind={k} />
          <span className="ml-[6px] mt-[7px] h-5 leading-5 text-black">{t}</span>
        </div>
      ))}
    </div>
    <SectionHeader title="设备和驱动器 (11)" />
    <div className="grid grid-cols-[repeat(4,318px)] pl-[25px]">
      {drives.map((d) => <DriveItem key={d.name} d={d} />)}
    </div>
  </div>
);

const StatusBar = () => (
  <div className="flex h-[29px] items-center pl-[18px] pr-[10px]">
    <span className="-mt-[2px] text-[#1f4566]">18 个项目</span>
    <div className="ml-3 h-[14px] w-px bg-[#e8e8e8]" />
    <svg className="ml-auto" width="18" height="16" viewBox="0 0 18 16">
      {[0, 5, 10].map((y, i) => (
        <g key={y}>
          <rect x=".5" y={y + 0.5} width="5" height="5" fill="#fff" stroke="#999" />
          <rect x="2" y={y + 2} width="2" height="2" fill={["#2d6aa8", "#7a8a2e", "#c03a1e"][i]} />
          <path d={`M7 ${y + 2.5}H12M13 ${y + 2.5}H18`} stroke="#777" />
        </g>
      ))}
    </svg>
    <div className="ml-[10px]"><Photo /></div>
  </div>
);

export default function App() {
  return (
    <div lang="zh-CN" className="relative h-[924px] w-[1888px] overflow-hidden bg-black font-['Open_Sans','Noto_Sans_CJK_SC',sans-serif] text-[15px] leading-5">
      <Desktop />
      <Gadget />
      <div className="absolute left-[42px] top-[5px] flex h-[914px] w-[1728px] flex-col bg-[#fefefe] outline outline-1 outline-[#2b3436]">
        <TitleBar />
        <Tabs />
        <Ribbon />
        <AddressRow />
        <div className="flex h-[641px]">
          <NavPane />
          <ScrollBar />
          <Content />
        </div>
        <StatusBar />
      </div>
    </div>
  );
}
